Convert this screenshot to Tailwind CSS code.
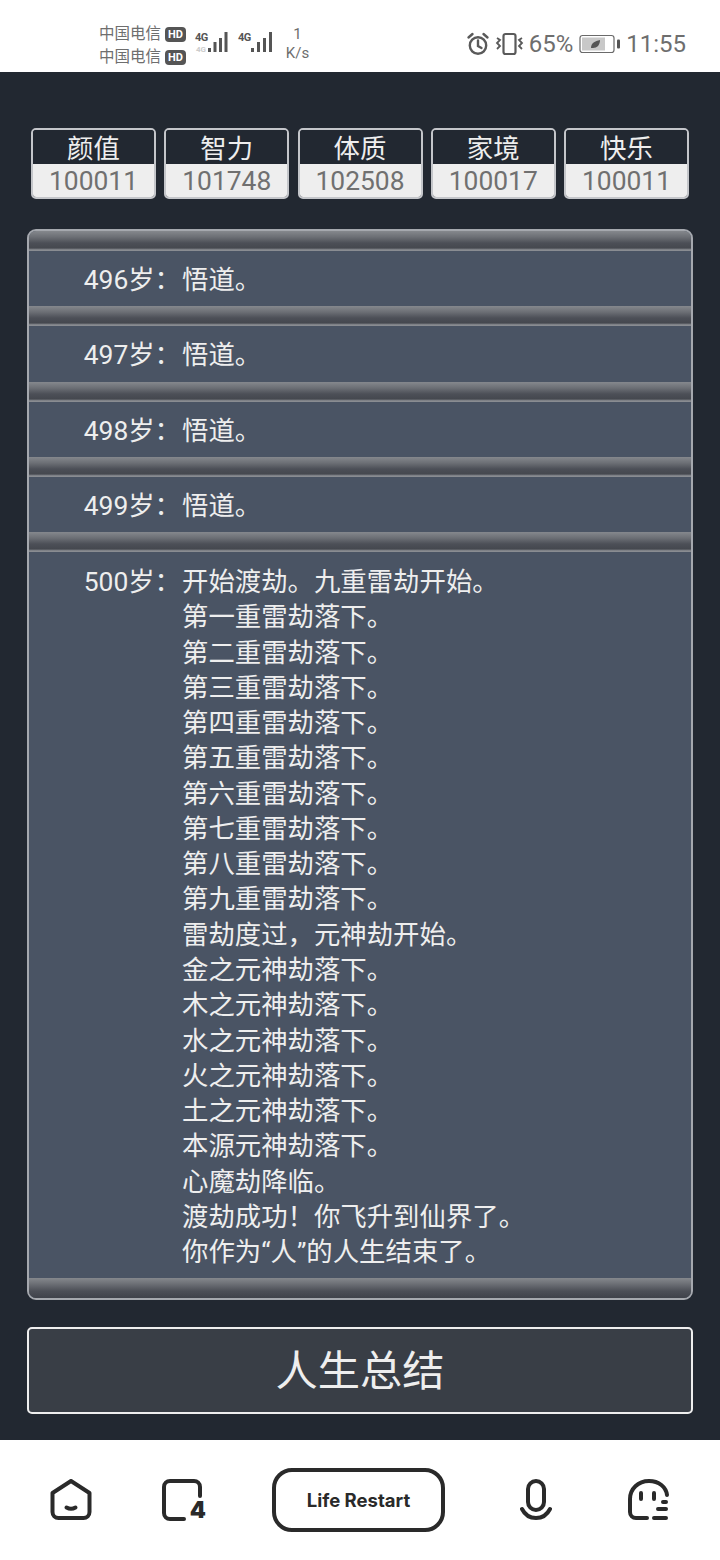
<!DOCTYPE html>
<html lang="zh">
 <head>
  <meta charset="utf-8"/>
  <title>Life Restart</title>
  <script src="https://cdn.jsdelivr.net/npm/@tailwindcss/browser@4"></script>
 </head>
 <body class="w-[720px] h-[1560px] overflow-hidden flex flex-col bg-[#222831] font-['Roboto','Noto_Sans_CJK_SC',sans-serif]">
  <!-- status bar -->
  <header class="h-[72px] bg-white flex items-center justify-between pt-[16px] pl-[99px] pr-[34px] text-[#6e6e6e]">
   <div class="flex items-center">
    <div class="w-[95px] mt-[3px] text-[15.500px] leading-[23px]">
     <div class="flex items-center gap-[4px]">中国电信<span class="bg-[#555] text-white rounded-[4px] text-[11px] leading-[15px] font-bold px-[3px]">HD</span></div>
     <div class="flex items-center gap-[4px]">中国电信<span class="bg-[#555] text-white rounded-[4px] text-[11px] leading-[15px] font-bold px-[3px]">HD</span></div>
    </div>
    <div class="relative w-[43px] h-[24px]">
     <span class="absolute left-[1px] top-[0px] text-[11px] leading-[12px] font-bold tracking-[-0.5px] text-[#555]">4G</span>
     <span class="absolute left-[2px] top-[13px] text-[8px] leading-[10px] font-bold text-[#ccc]">4G</span>
     <svg class="absolute left-[13px] top-[0px]" width="24" height="22" viewBox="0 0 24 22" fill="#555"><rect x="1" y="16" width="3" height="4"/><rect x="6.500" y="10" width="3" height="10"/><rect x="12" y="6" width="3" height="14"/><rect x="17.500" y="0" width="3" height="20"/></svg>
    </div>
    <div class="relative w-[46px] h-[24px]">
     <span class="absolute left-[1px] top-[0px] text-[11px] leading-[12px] font-bold tracking-[-0.5px] text-[#555]">4G</span>
     <svg class="absolute left-[13px] top-[0px]" width="25" height="22" viewBox="0 0 25 22" fill="#555"><rect x="1" y="16" width="3" height="4"/><rect x="7" y="10" width="3" height="10"/><rect x="13" y="6" width="3" height="14"/><rect x="19" y="0" width="3" height="20"/></svg>
    </div>
    <div class="ml-[2px] w-[25px] text-center text-[15px] leading-[19px]">1<br/>K/s</div>
   </div>
   <div class="flex items-center">
    <svg width="24" height="24" viewBox="0 0 24 24" fill="none" stroke="#5a5a5a" stroke-width="2.400" stroke-linecap="round"><circle cx="12" cy="13.500" r="8.200"/><path d="M12 8.500v5.500l3.500 2M2.500 5.500 6.500 2M21.500 5.500l-4-3.500"/></svg>
    <svg class="ml-[5px]" width="30" height="24" viewBox="0 0 30 24" fill="none" stroke="#5a5a5a" stroke-width="2.200"><rect x="8.500" y="2" width="12" height="20" rx="2"/><path d="M2 6l3 2-3 3 3 3-3 3M27 6l-3 2 3 3-3 3 3 3" stroke-width="1.800"/></svg>
    <span class="ml-[4px] text-[24px] leading-[28px]">65%</span>
    <svg class="ml-[6px]" width="44" height="22" viewBox="0 0 44 22" fill="none"><rect x="1" y="2.500" width="34" height="17" rx="2.500" stroke="#6a6a6a" stroke-width="1.200"/><rect x="3" y="4.500" width="23" height="13" fill="#c8c8c8"/><path d="M12 15c0-5 4-7 9-8 0 5-3 8-7 8z" fill="#555"/><rect x="38" y="6.500" width="3" height="9" rx="1" fill="#555"/></svg>
    <span class="ml-[3px] text-[24px] leading-[28px]">11:55</span>
   </div>
  </header>

  <main class="flex-1 flex flex-col">
   <!-- properties -->
   <div class="mt-[56px] mx-[31px] flex gap-[8.250px]">
    <div class="flex-1 h-[71px] rounded-[5px] border-2 border-[#c4c6ca] overflow-hidden text-center">
     <div class="h-[34px] bg-[#222831] text-[#eeeeee] text-[26.400px] leading-[38px]">颜值</div>
     <div class="h-[33px] bg-[#eeeeee] text-[#707070] text-[26.400px] leading-[34px]">100011</div>
    </div>
    <div class="flex-1 h-[71px] rounded-[5px] border-2 border-[#c4c6ca] overflow-hidden text-center">
     <div class="h-[34px] bg-[#222831] text-[#eeeeee] text-[26.400px] leading-[38px]">智力</div>
     <div class="h-[33px] bg-[#eeeeee] text-[#707070] text-[26.400px] leading-[34px]">101748</div>
    </div>
    <div class="flex-1 h-[71px] rounded-[5px] border-2 border-[#c4c6ca] overflow-hidden text-center">
     <div class="h-[34px] bg-[#222831] text-[#eeeeee] text-[26.400px] leading-[38px]">体质</div>
     <div class="h-[33px] bg-[#eeeeee] text-[#707070] text-[26.400px] leading-[34px]">102508</div>
    </div>
    <div class="flex-1 h-[71px] rounded-[5px] border-2 border-[#c4c6ca] overflow-hidden text-center">
     <div class="h-[34px] bg-[#222831] text-[#eeeeee] text-[26.400px] leading-[38px]">家境</div>
     <div class="h-[33px] bg-[#eeeeee] text-[#707070] text-[26.400px] leading-[34px]">100017</div>
    </div>
    <div class="flex-1 h-[71px] rounded-[5px] border-2 border-[#c4c6ca] overflow-hidden text-center">
     <div class="h-[34px] bg-[#222831] text-[#eeeeee] text-[26.400px] leading-[38px]">快乐</div>
     <div class="h-[33px] bg-[#eeeeee] text-[#707070] text-[26.400px] leading-[34px]">100011</div>
    </div>
   </div>

   <!-- trajectory -->
   <div class="mt-[30px] mx-[27px] h-[1071px] rounded-[9px] border-2 border-[#a5a8ae] overflow-hidden bg-[#4a5464] text-[#eeeeee] text-[26.400px] leading-[35.270px]">
    <div class="h-[20px] bg-[linear-gradient(to_bottom,#85888d_0%,#6c6f75_30%,#4c4f57_60%,#45484f_85%,#7c7f85_92%,#8f9297_100%)]"></div>
    <div class="flex pt-[12px] pb-[8px]"><div class="w-[153px] pr-[1px] text-right">496岁：</div><div>悟道。</div></div>
    <div class="h-[20px] bg-[linear-gradient(to_bottom,#85888d_0%,#6c6f75_30%,#4c4f57_60%,#45484f_85%,#7c7f85_92%,#8f9297_100%)]"></div>
    <div class="flex pt-[12px] pb-[8px]"><div class="w-[153px] pr-[1px] text-right">497岁：</div><div>悟道。</div></div>
    <div class="h-[20px] bg-[linear-gradient(to_bottom,#85888d_0%,#6c6f75_30%,#4c4f57_60%,#45484f_85%,#7c7f85_92%,#8f9297_100%)]"></div>
    <div class="flex pt-[12px] pb-[8px]"><div class="w-[153px] pr-[1px] text-right">498岁：</div><div>悟道。</div></div>
    <div class="h-[20px] bg-[linear-gradient(to_bottom,#85888d_0%,#6c6f75_30%,#4c4f57_60%,#45484f_85%,#7c7f85_92%,#8f9297_100%)]"></div>
    <div class="flex pt-[12px] pb-[8px]"><div class="w-[153px] pr-[1px] text-right">499岁：</div><div>悟道。</div></div>
    <div class="h-[20px] bg-[linear-gradient(to_bottom,#85888d_0%,#6c6f75_30%,#4c4f57_60%,#45484f_85%,#7c7f85_92%,#8f9297_100%)]"></div>
    <div class="flex pt-[13px] pb-[8px]">
     <div class="w-[153px] pr-[1px] text-right">500岁：</div>
     <div>开始渡劫。九重雷劫开始。<br/>第一重雷劫落下。<br/>第二重雷劫落下。<br/>第三重雷劫落下。<br/>第四重雷劫落下。<br/>第五重雷劫落下。<br/>第六重雷劫落下。<br/>第七重雷劫落下。<br/>第八重雷劫落下。<br/>第九重雷劫落下。<br/>雷劫度过，元神劫开始。<br/>金之元神劫落下。<br/>木之元神劫落下。<br/>水之元神劫落下。<br/>火之元神劫落下。<br/>土之元神劫落下。<br/>本源元神劫落下。<br/>心魔劫降临。<br/>渡劫成功！你飞升到仙界了。<br/>你作为“人”的人生结束了。</div>
    </div>
    <div class="h-[20px] bg-[linear-gradient(to_bottom,#85888d_0%,#6c6f75_30%,#4c4f57_65%,#3f424a_100%)]"></div>
   </div>

   <button class="mt-[27px] mx-[27px] h-[87px] pt-[3px] rounded-[5px] border-2 border-[#eeeeee] bg-[#393e46] text-[#eeeeee] text-[42.240px]">人生总结</button>
  </main>

  <!-- browser toolbar -->
  <nav class="h-[120px] bg-white flex items-center pl-[50px] pb-[1px] text-[#2a2a2a]">
   <svg width="42" height="42" viewBox="0 0 42 42" fill="none" stroke="#2a2a2a" stroke-width="4" stroke-linecap="round" stroke-linejoin="round"><path d="M21 2 39.500 14v19a6 6 0 0 1-6 6h-25a6 6 0 0 1-6-6V14z"/><path d="M16.500 28.500c3 1.800 6 1.800 9 0"/></svg>
   <div class="relative ml-[70px] w-[44px] h-[42px]">
    <svg width="44" height="42" viewBox="0 0 44 42" fill="none" stroke="#2a2a2a" stroke-width="4" stroke-linecap="round" stroke-linejoin="round"><path d="M38 17V8a6 6 0 0 0-6-6H8a6 6 0 0 0-6 6v26a6 6 0 0 0 6 6h14"/></svg>
    <span class="absolute right-0 bottom-[-1px] text-[23px] leading-[24px] font-black font-['Inter',sans-serif]">4</span>
   </div>
   <div class="ml-[66px] w-[173px] h-[64px] rounded-[20px] border-[4px] border-[#2a2a2a] flex items-center justify-center pt-[2px] text-[18.500px] font-bold font-['Inter',sans-serif]">Life Restart</div>
   <svg class="ml-[75px]" width="32" height="42" viewBox="0 0 32 42" fill="none" stroke="#2a2a2a" stroke-width="4" stroke-linecap="round"><rect x="8" y="2" width="16" height="29" rx="8"/><path d="M2 30c3 6 8 9 14 9s11-3 14-9"/></svg>
   <svg class="ml-[76px]" width="42" height="42" viewBox="0 0 42 42" fill="none" stroke="#2a2a2a" stroke-width="4" stroke-linecap="round" stroke-linejoin="round"><path d="M39 16C38 8 31 2 21 2 10 2 2 10 2 20v13a6 6 0 0 0 6 6h11"/><path d="M13 14v6M26 14v6M35 23h3M30 30h8M26 39h12"/></svg>
  </nav>
 </body>
</html>
